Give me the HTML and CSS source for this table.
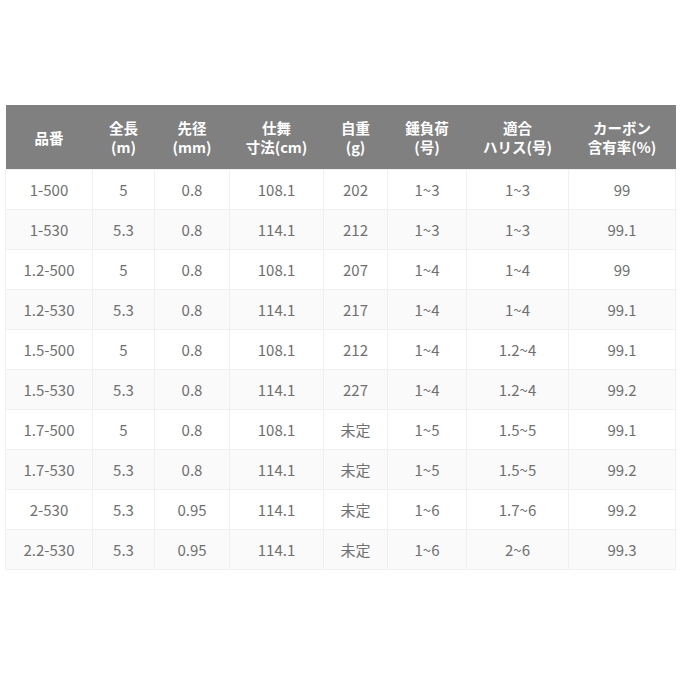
FILE: index.html
```html
<!DOCTYPE html>
<html lang="ja">
<head>
<meta charset="utf-8">
<link rel="stylesheet" href="styles.css">
</head>
<body>
<table class="spec">
<colgroup>
<col class="c1"><col class="c2"><col class="c3"><col class="c4"><col class="c5"><col class="c6"><col class="c7"><col class="c8">
</colgroup>
<thead>
<tr>
<th>品番</th>
<th>全長<br>(m)</th>
<th>先径<br>(mm)</th>
<th>仕舞<br>寸法(cm)</th>
<th>自重<br>(g)</th>
<th>錘負荷<br>(号)</th>
<th>適合<br>ハリス(号)</th>
<th>カーボン<br>含有率(%)</th>
</tr>
</thead>
<tbody>
<tr><td>1-500</td><td>5</td><td>0.8</td><td>108.1</td><td>202</td><td>1~3</td><td>1~3</td><td>99</td></tr>
<tr><td>1-530</td><td>5.3</td><td>0.8</td><td>114.1</td><td>212</td><td>1~3</td><td>1~3</td><td>99.1</td></tr>
<tr><td>1.2-500</td><td>5</td><td>0.8</td><td>108.1</td><td>207</td><td>1~4</td><td>1~4</td><td>99</td></tr>
<tr><td>1.2-530</td><td>5.3</td><td>0.8</td><td>114.1</td><td>217</td><td>1~4</td><td>1~4</td><td>99.1</td></tr>
<tr><td>1.5-500</td><td>5</td><td>0.8</td><td>108.1</td><td>212</td><td>1~4</td><td>1.2~4</td><td>99.1</td></tr>
<tr><td>1.5-530</td><td>5.3</td><td>0.8</td><td>114.1</td><td>227</td><td>1~4</td><td>1.2~4</td><td>99.2</td></tr>
<tr><td>1.7-500</td><td>5</td><td>0.8</td><td>108.1</td><td>未定</td><td>1~5</td><td>1.5~5</td><td>99.1</td></tr>
<tr><td>1.7-530</td><td>5.3</td><td>0.8</td><td>114.1</td><td>未定</td><td>1~5</td><td>1.5~5</td><td>99.2</td></tr>
<tr><td>2-530</td><td>5.3</td><td>0.95</td><td>114.1</td><td>未定</td><td>1~6</td><td>1.7~6</td><td>99.2</td></tr>
<tr><td>2.2-530</td><td>5.3</td><td>0.95</td><td>114.1</td><td>未定</td><td>1~6</td><td>2~6</td><td>99.3</td></tr>
</tbody>
</table>
</body>
</html>
```
FILE: styles.css
```css
html, body {
  margin: 0;
  background: #ffffff;
}
body {
  padding: 105px 5px 0 5px;
  font-family: "Noto Sans CJK JP", "Noto Sans", sans-serif;
}
.spec {
  width: 670px;
  border-collapse: collapse;
  table-layout: fixed;
}
.c1 { width: 87px; }
.c2 { width: 62px; }
.c3 { width: 75px; }
.c4 { width: 94px; }
.c5 { width: 64px; }
.c6 { width: 79px; }
.c7 { width: 102px; }
.c8 { width: 107px; }
.spec th {
  background: #808080;
  color: #ffffff;
  font-weight: 700;
  font-size: 14.5px;
  line-height: 19px;
  height: 64px;
  padding: 0;
  text-align: center;
  vertical-align: middle;
}
.spec td {
  height: 39px;
  padding: 0;
  text-align: center;
  vertical-align: middle;
  font-size: 15px;
  color: #707070;
  border: 1px solid #f0f0f0;
}
.spec tbody tr:nth-child(even) td {
  background: #fafafa;
}
```
